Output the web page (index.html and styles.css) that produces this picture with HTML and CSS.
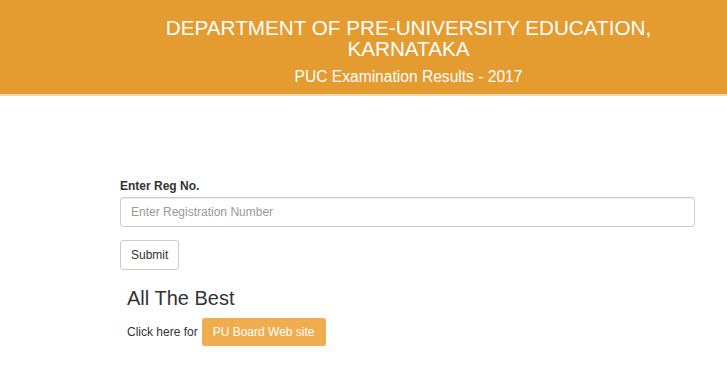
FILE: index.html
```html
<!DOCTYPE html>
<html lang="en">
<head>
    <meta charset="UTF-8">
    <meta name="viewport" content="width=device-width, initial-scale=1.0">
    <title>PUC Examination Results - 2017</title>
    <link rel="stylesheet" href="styles.css">
</head>
<body>
    <div class="header">
        <h1 class="title">DEPARTMENT OF PRE-UNIVERSITY EDUCATION,<br>KARNATAKA</h1>
        <div class="subtitle">PUC Examination Results - 2017</div>
    </div>

    <div class="container">
        <form class="form" onsubmit="return false;">
            <label class="label" for="regno">Enter Reg No.</label>
            <input class="input" id="regno" type="text" placeholder="Enter Registration Number">
            <button class="btn" type="submit">Submit</button>
        </form>
        <div class="best">
            <h2 class="best-title">All The Best</h2>
            <div class="link-row">
                <span>Click here for</span>
                <a class="btn-warning" href="#">PU Board Web site</a>
            </div>
        </div>
    </div>
</body>
</html>
```

FILE: styles.css
```css
body {
    margin: 0;
    font-family: "Liberation Sans", Arial, sans-serif;
    font-size: 12px;
    color: #333;
    background: #fff;
}
.header {
    background-color: #e49b30;
    color: #fff;
    height: 96px;
    border-bottom: 2px solid #f3d9ae;
    box-sizing: border-box;
    padding: 17px 0 0 90px;
    text-align: center;
}
.title {
    margin: 0;
    font-size: 20.7px;
    font-weight: normal;
    line-height: 21px;
}
.subtitle {
    margin-top: 9px;
    font-size: 15.6px;
}
.container {
    padding: 83px 32px 0 120px;
}
.form {
    display: flex;
    flex-direction: column;
    align-items: flex-start;
}
.label {
    font-weight: bold;
    margin-bottom: 4px;
}
.input {
    width: 100%;
    height: 30px;
    box-sizing: border-box;
    border: 1px solid #ccc;
    border-radius: 3px;
    padding: 5px 10px;
    font-family: inherit;
    font-size: 12px;
    color: #555;
    box-shadow: inset 0 1px 1px rgba(0, 0, 0, 0.075);
}
.input::placeholder {
    color: #999;
}
.btn {
    margin-top: 13px;
    height: 30px;
    padding: 0 10px;
    background: #fff;
    border: 1px solid #ccc;
    border-radius: 3px;
    font-family: inherit;
    font-size: 12px;
    color: #333;
}
.best {
    padding-left: 7px;
}
.best-title {
    margin: 17px 0 9px;
    font-size: 20px;
    font-weight: normal;
    line-height: 22px;
}
.link-row {
    display: flex;
    align-items: center;
    gap: 4px;
}
.btn-warning {
    display: inline-block;
    height: 28px;
    line-height: 28px;
    padding: 0 11px;
    background: #f0ad4e;
    color: #fff;
    border-radius: 3px;
    text-decoration: none;
}
```
